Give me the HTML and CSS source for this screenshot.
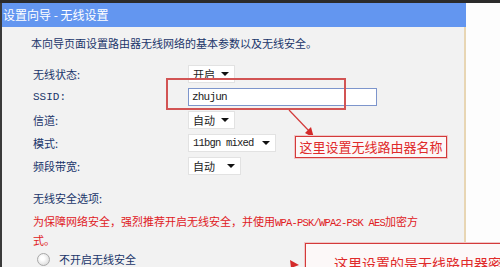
FILE: index.html
```html
<!DOCTYPE html>
<html lang="zh-CN">
<head>
    <meta charset="UTF-8">
    <title>设置向导 - 无线设置</title>
    <link rel="stylesheet" href="styles.css">
</head>
<body>
    <div class="page">
        <div class="panel">
            <div class="title">设置向导 - 无线设置</div>
            <div class="content">
                <p class="intro">本向导页面设置路由器无线网络的基本参数以及无线安全。</p>
                <div class="form">
                    <div class="label">无线状态:</div>
                    <div><span class="select w47">开启<i class="caret"></i></span></div>
                    <div class="label mono">SSID:</div>
                    <div><span class="input mono">zhujun</span></div>
                    <div class="label">信道:</div>
                    <div><span class="select w47">自动<i class="caret"></i></span></div>
                    <div class="label">模式:</div>
                    <div><span class="select w87"><span class="mono tight">11bgn mixed</span><i class="caret"></i></span></div>
                    <div class="label">频段带宽:</div>
                    <div><span class="select w53">自动<i class="caret"></i></span></div>
                </div>
                <p class="section">无线安全选项:</p>
                <p class="warn">为保障网络安全，强烈推荐开启无线安全，并使用<span class="mono tight">WPA-PSK/WPA2-PSK AES</span>加密方<br>式。</p>
                <div class="radio"><span class="dot"></span>不开启无线安全</div>
            </div>
        </div>

        <!-- annotations drawn over the screenshot -->
        <div class="mark-ssid"></div>
        <svg class="arrows" width="500" height="267" viewBox="0 0 500 267">
            <line x1="289" y1="110" x2="310" y2="132" stroke="#d23a3a" stroke-width="1.2"/>
            <polygon points="314,138 305,133 311,127" fill="#d42a2a"/>
            <polygon points="299,265 290,260 291,268" fill="#d42a2a"/>
        </svg>
        <div class="callout callout-name">这里设置无线路由器名称</div>
        <div class="callout callout-key">这里设置的是无线路由器密码</div>
    </div>
</body>
</html>
```

FILE: styles.css
```css
html, body {
    margin: 0;
    overflow: hidden;
    background: #fdfdfd;
}
.page {
    position: relative;
    width: 500px;
    height: 264px;
    border-top: 3px solid #2b2b2b;
    overflow: hidden;
    font-family: "Noto Sans CJK SC", "Liberation Sans", sans-serif;
    font-size: 11px;
    color: #1a356a;
}
.mono {
    font-family: "Liberation Mono", "Noto Sans CJK SC", monospace;
}
.tight {
    font-size: 10.5px;
    letter-spacing: -0.8px;
}
.panel {
    width: 464px;
    border-left: 2px solid #3a3a3a;
}
.title {
    height: 24px;
    line-height: 24px;
    padding-left: 1px;
    background: #6396f0;
    color: #fff;
    font-size: 12px;
}
.content {
    min-height: 250px;
    padding: 8px 0 0 29px;
    background: #f2f2f2;
    border-right: 2px solid #e8d6b4;
}
.intro {
    margin: 0;
    line-height: 16px;
}
.form {
    display: grid;
    grid-template-columns: 155px auto;
    grid-auto-rows: 23px;
    align-items: center;
    margin: 11px 0 0 2px;
}
.select {
    display: inline-flex;
    align-items: center;
    justify-content: space-between;
    box-sizing: border-box;
    height: 18px;
    padding: 0 5px 0 4px;
    background: #fff;
    border: 1px solid #e2e2e2;
    color: #222;
    vertical-align: middle;
}
.w47 { width: 47px; }
.w53 { width: 53px; }
.w87 { width: 88px; }
.caret {
    width: 0;
    height: 0;
    border-left: 4px solid transparent;
    border-right: 4px solid transparent;
    border-top: 4px solid #111;
}
.input {
    display: inline-block;
    box-sizing: border-box;
    width: 189px;
    height: 18px;
    line-height: 16px;
    padding-left: 3px;
    background: #fff;
    border: 1px solid #7d95cc;
    color: #222;
    letter-spacing: -0.8px;
    vertical-align: middle;
}
.section {
    margin: 13px 0 0 2px;
    line-height: 16px;
}
.warn {
    margin: 7px 0 0 2px;
    line-height: 17px;
    color: #e0201e;
}
.radio {
    display: flex;
    align-items: center;
    margin: 2px 0 0 6px;
    line-height: 16px;
}
.dot {
    width: 11px;
    height: 11px;
    margin-right: 9px;
    border: 1px solid #a8a8a8;
    border-radius: 50%;
    background: radial-gradient(circle at 40% 40%, #fff 20%, #d6d6d6 90%);
}
.mark-ssid {
    position: absolute;
    left: 166px;
    top: 75px;
    width: 180px;
    height: 32px;
    box-sizing: border-box;
    border: 2px solid #d25454;
}
.arrows {
    position: absolute;
    left: 0;
    top: -3px;
}
.callout {
    position: absolute;
    box-sizing: border-box;
    border: 1px solid #d43a3a;
    box-shadow: 0 0 0 1px #f0c8c8;
    background: #fcf8f8;
    color: #e02a2a;
}
.callout-name {
    left: 295px;
    top: 133px;
    width: 152px;
    height: 22px;
    font-size: 13px;
    line-height: 20px;
    text-align: center;
}
.callout-key {
    left: 305px;
    top: 240px;
    width: 230px;
    height: 40px;
    padding: 11px 0 0 28px;
    font-size: 14px;
    line-height: 16px;
    white-space: nowrap;
}
```
